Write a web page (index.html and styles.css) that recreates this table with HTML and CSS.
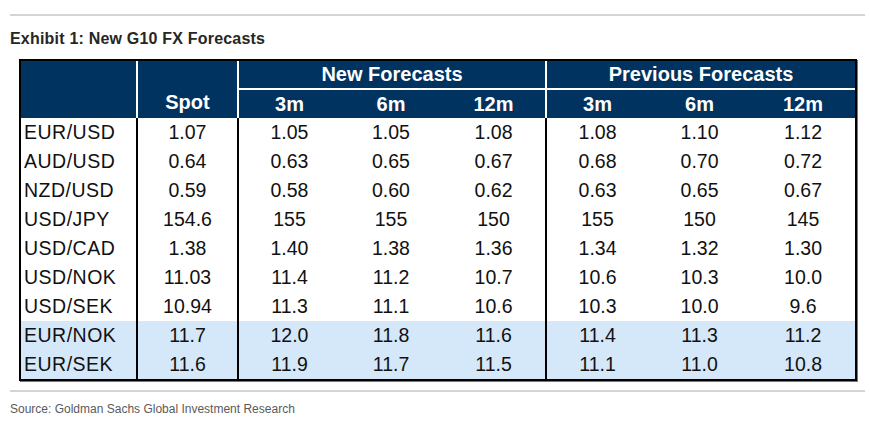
FILE: index.html
```html
<!DOCTYPE html>
<html>
<head>
<meta charset="utf-8">
<link rel="stylesheet" href="styles.css">
</head>
<body>
<div class="page">
  <div class="rule"></div>
  <h1 class="title">Exhibit 1: New G10 FX Forecasts</h1>
  <table class="fx">
    <colgroup>
      <col class="c-label"><col class="c-spot"><col class="c-a"><col class="c-b"><col class="c-a"><col class="c-a"><col class="c-a"><col class="c-last">
    </colgroup>
    <thead>
      <tr class="h1">
        <th rowspan="2"></th>
        <th rowspan="2" class="sep spot">Spot</th>
        <th colspan="3" class="sep group">New Forecasts</th>
        <th colspan="3" class="sep group">Previous Forecasts</th>
      </tr>
      <tr class="h2">
        <th class="sep">3m</th><th>6m</th><th>12m</th>
        <th class="sep">3m</th><th>6m</th><th>12m</th>
      </tr>
    </thead>
    <tbody>
      <tr><td class="lbl">EUR/USD</td><td class="sep">1.07</td><td class="sep">1.05</td><td>1.05</td><td>1.08</td><td class="sep">1.08</td><td>1.10</td><td>1.12</td></tr>
      <tr><td class="lbl">AUD/USD</td><td class="sep">0.64</td><td class="sep">0.63</td><td>0.65</td><td>0.67</td><td class="sep">0.68</td><td>0.70</td><td>0.72</td></tr>
      <tr><td class="lbl">NZD/USD</td><td class="sep">0.59</td><td class="sep">0.58</td><td>0.60</td><td>0.62</td><td class="sep">0.63</td><td>0.65</td><td>0.67</td></tr>
      <tr><td class="lbl">USD/JPY</td><td class="sep">154.6</td><td class="sep">155</td><td>155</td><td>150</td><td class="sep">155</td><td>150</td><td>145</td></tr>
      <tr><td class="lbl">USD/CAD</td><td class="sep">1.38</td><td class="sep">1.40</td><td>1.38</td><td>1.36</td><td class="sep">1.34</td><td>1.32</td><td>1.30</td></tr>
      <tr><td class="lbl">USD/NOK</td><td class="sep">11.03</td><td class="sep">11.4</td><td>11.2</td><td>10.7</td><td class="sep">10.6</td><td>10.3</td><td>10.0</td></tr>
      <tr><td class="lbl">USD/SEK</td><td class="sep">10.94</td><td class="sep">11.3</td><td>11.1</td><td>10.6</td><td class="sep">10.3</td><td>10.0</td><td>9.6</td></tr>
      <tr class="hl"><td class="lbl">EUR/NOK</td><td class="sep">11.7</td><td class="sep">12.0</td><td>11.8</td><td>11.6</td><td class="sep">11.4</td><td>11.3</td><td>11.2</td></tr>
      <tr class="hl"><td class="lbl">EUR/SEK</td><td class="sep">11.6</td><td class="sep">11.9</td><td>11.7</td><td>11.5</td><td class="sep">11.1</td><td>11.0</td><td>10.8</td></tr>
    </tbody>
  </table>
  <div class="rule bottom"></div>
  <p class="source">Source: Goldman Sachs Global Investment Research</p>
</div>
</body>
</html>
```

FILE: styles.css
```css
html, body {
  margin: 0;
  padding: 0;
  background: #fff;
}
.page {
  padding: 14px 5px 0 10px;
  font-family: "Liberation Sans", Arial, sans-serif;
}
.rule {
  width: 855px;
  height: 2px;
  background: #d4d4d4;
}
.title {
  margin: 13px 0 0 0;
  font-family: "Liberation Sans", Arial, sans-serif;
  font-weight: bold;
  font-size: 16px;
  line-height: 19px;
  color: #262626;
  letter-spacing: 0.2px;
}
.fx {
  margin: 11px 0 0 9px;
  width: 838px;
  table-layout: fixed;
  border-collapse: separate;
  border-spacing: 0;
  border: 2px solid #000;
  box-shadow: 1px 1px 0 #777;
  font-size: 19.5px;
  color: #111;
}
.c-label { width: 115px; }
.c-spot { width: 101px; }
.c-a { width: 103px; }
.c-b { width: 102px; }
.c-last { width: 104px; }
.fx th {
  background: #00335f;
  color: #fff;
  font-weight: bold;
  font-size: 20px;
  padding: 0;
  text-align: center;
}
.fx .h1 th { height: 27px; }
.fx .h2 th { height: 28px; border-top: 2px solid #fff; vertical-align: middle; }
.fx .h1 th.spot { vertical-align: bottom; padding-bottom: 4px; }
.fx th.sep { border-left: 2px solid #fff; }
.fx td {
  height: 29px;
  padding: 0;
  text-align: center;
  vertical-align: middle;
}
.fx td.sep { border-left: 2px solid #000; }
.fx td.lbl { text-align: left; padding-left: 3px; letter-spacing: 0.5px; }
.fx tr.hl td { background: #d5e8fa; }
.rule.bottom {
  margin-top: 9px;
}
.source {
  margin: 10px 0 0 0;
  font-family: "Liberation Sans", Arial, sans-serif;
  font-size: 12px;
  color: #5a5a5a;
}
```
